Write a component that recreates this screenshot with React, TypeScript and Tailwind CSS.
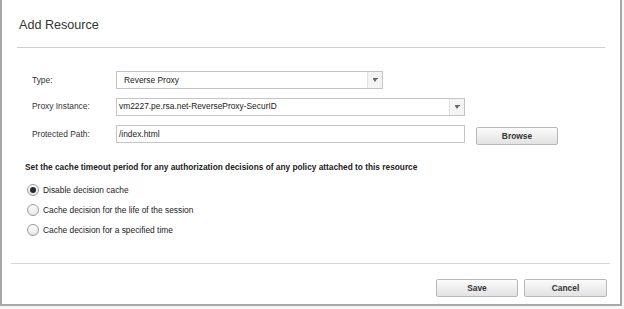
import React from "react";

const font = { fontFamily: '"Liberation Sans", Arial, sans-serif' };

function SelectBox({ value, width, padLeft }: { value: string; width: string; padLeft: string }) {
  return (
    <div className={`${width} h-[18px] flex items-stretch border border-[#c4c4c4] bg-white`}>
      <div className={`flex-1 flex items-center ${padLeft} text-[8.4px] text-[#222] leading-none`}>
        {value}
      </div>
      <div className="w-[15px] flex items-center justify-center bg-[#f4f4f4] border-l border-[#e2e2e2]">
        <div className="flex flex-col items-center">
          <div className="w-[5px] h-px bg-[#666]" />
          <div className="w-0 h-0 border-l-[2.5px] border-r-[2.5px] border-t-[3px] border-l-transparent border-r-transparent border-t-[#666]" />
        </div>
      </div>
    </div>
  );
}

function Radio({ checked, label }: { checked?: boolean; label: string }) {
  return (
    <div className="h-[12px] flex items-center">
      <div className="w-[12px] h-[12px] rounded-full border border-[#9a9a9a] bg-gradient-to-b from-white to-[#e6e6e6] flex items-center justify-center">
        {checked && <div className="w-[6px] h-[6px] rounded-full bg-[#2a2a2a]" />}
      </div>
      <span className="ml-[4px] text-[8.4px] text-[#222] leading-none">{label}</span>
    </div>
  );
}

function Btn({ label, width }: { label: string; width: string }) {
  return (
    <button
      type="button"
      className={`${width} h-[18px] rounded-[2px] border border-[#b8b8b8] bg-gradient-to-b from-[#fbfbfb] to-[#e2e2e2] text-[8.4px] font-bold text-[#333] leading-none`}
    >
      {label}
    </button>
  );
}

export default function App() {
  return (
    <div className="w-[624px] h-[309px] bg-[#f7f7f7]" style={font}>
      <div className="w-[622px] h-[306px] bg-white border-l-2 border-r-2 border-b-2 border-[#a8a8a8] flex flex-col">
        <h1 className="pt-[18px] pl-[17px] text-[12.6px] leading-[14px] text-[#333] font-normal">
          Add Resource
        </h1>
        <div className="mt-[15px] ml-[15px] mr-[15px] h-px bg-[#cfcfcf]" />

        <div className="mt-[23px] flex flex-col">
          <div className="h-[18px] flex items-center">
            <span className="w-[114px] pl-[30px] text-[8.4px] text-[#333]">Type:</span>
            <SelectBox value="Reverse Proxy" width="w-[267px]" padLeft="pl-[7px]" />
          </div>
          <div className="mt-[8px] h-[19px] flex items-center">
            <span className="w-[114px] pl-[30px] text-[8.4px] text-[#333]">Proxy Instance:</span>
            <SelectBox value="vm2227.pe.rsa.net-ReverseProxy-SecurID" width="w-[349px]" padLeft="pl-[2px]" />
          </div>
          <div className="mt-[9px] h-[18px] flex items-center">
            <span className="w-[114px] pl-[30px] text-[8.4px] text-[#333]">Protected Path:</span>
            <div className="w-[349px] h-[18px] flex items-center pl-[2px] border border-[#c4c4c4] text-[8.4px] text-[#222] leading-none">
              /index.html
            </div>
            <div className="ml-[11px]">
              <Btn label="Browse" width="w-[82px]" />
            </div>
          </div>
        </div>

        <p className="mt-[19px] pl-[23px] text-[8.3px] leading-[10px] font-bold text-[#222]">
          Set the cache timeout period for any authorization decisions of any policy attached to this resource
        </p>

        <div className="mt-[12px] pl-[25px] flex flex-col gap-[8px]">
          <Radio checked label="Disable decision cache" />
          <Radio label="Cache decision for the life of the session" />
          <Radio label="Cache decision for a specified time" />
        </div>

        <div className="mt-[27px] ml-[9px] mr-[10px] h-px bg-[#d6d6d6]" />

        <div className="mt-[15px] flex justify-end gap-[6px] pr-[13px]">
          <Btn label="Save" width="w-[82px]" />
          <Btn label="Cancel" width="w-[83px]" />
        </div>
      </div>
    </div>
  );
}
